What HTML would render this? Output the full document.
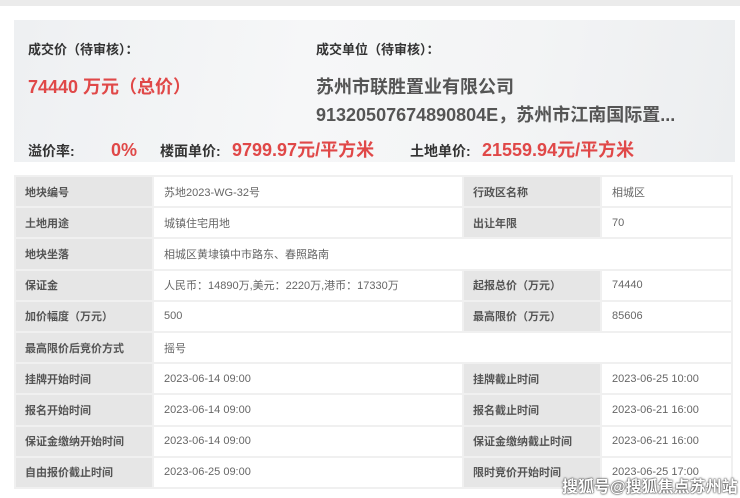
<!DOCTYPE html>
<html><head><meta charset="utf-8"><style>
*{margin:0;padding:0;box-sizing:border-box}
body{width:740px;height:498px;overflow:hidden;background:#fff;font-family:"Liberation Sans","Noto Sans CJK SC",sans-serif;position:relative}
.top{position:absolute;left:0;top:0;width:740px;height:6px;background:#ebebeb}
.sum{position:absolute;left:14px;top:20px;width:721px;height:142px;background:linear-gradient(100deg,#eef0f2 0%,#f6f7f8 40%,#f3f4f5 70%,#eceef0 100%)}
.t{position:absolute;white-space:nowrap}
.lab{font-size:13px;color:#333;font-weight:bold}
.red{color:#e04848;font-weight:bold}
.co{font-size:18px;color:#555;font-weight:bold}
.row{position:absolute;left:28px;top:136px;height:26px;display:flex;align-items:baseline;white-space:nowrap}
.row .lab{font-size:14px}
.row .red{font-size:18px}
table{position:absolute;left:14px;top:175px;width:719px;border-collapse:collapse;font-size:11px}
td{height:31.2px;border:2px solid #f0f0f0;padding-left:10px;color:#666}
td.l{background:#e6e6e6;color:#555;font-weight:bold;padding-left:9px}
.wm{position:absolute;left:562px;top:473px;font-size:16px;color:#fff;font-weight:bold;text-shadow:0 0 2px #333,0 0 1px #000;white-space:nowrap}
</style></head><body>
<div class="top"></div>
<div class="sum"></div>
<div class="t lab" style="left:28px;top:39px">成交价（待审核）：</div>
<div class="t lab" style="left:316px;top:39px">成交单位（待审核）：</div>
<div class="t red" style="left:28px;top:73px;font-size:18px">74440 万元（总价）</div>
<div class="t co" style="left:316px;top:73px">苏州市联胜置业有限公司</div>
<div class="t co" style="left:316px;top:101px">91320507674890804E，苏州市江南国际置...</div>
<div class="row">
<span class="lab" style="width:83px">溢价率:</span><span class="red" style="width:49px">0%</span>
<span class="lab" style="width:72px">楼面单价:</span><span class="red" style="width:178px">9799.97元/平方米</span>
<span class="lab" style="width:72px">土地单价:</span><span class="red">21559.94元/平方米</span>
</div>
<table>
<colgroup><col style="width:138px"><col style="width:310px"><col style="width:138px"><col></colgroup>
<tr><td class="l">地块编号</td><td>苏地2023-WG-32号</td><td class="l">行政区名称</td><td>相城区</td></tr>
<tr><td class="l">土地用途</td><td>城镇住宅用地</td><td class="l">出让年限</td><td>70</td></tr>
<tr><td class="l">地块坐落</td><td colspan="3">相城区黄埭镇中市路东、春照路南</td></tr>
<tr><td class="l">保证金</td><td>人民币：14890万,美元：2220万,港币：17330万</td><td class="l">起报总价（万元）</td><td>74440</td></tr>
<tr><td class="l">加价幅度（万元）</td><td>500</td><td class="l">最高限价（万元）</td><td>85606</td></tr>
<tr><td class="l">最高限价后竞价方式</td><td colspan="3">摇号</td></tr>
<tr><td class="l">挂牌开始时间</td><td>2023-06-14 09:00</td><td class="l">挂牌截止时间</td><td>2023-06-25 10:00</td></tr>
<tr><td class="l">报名开始时间</td><td>2023-06-14 09:00</td><td class="l">报名截止时间</td><td>2023-06-21 16:00</td></tr>
<tr><td class="l">保证金缴纳开始时间</td><td>2023-06-14 09:00</td><td class="l">保证金缴纳截止时间</td><td>2023-06-21 16:00</td></tr>
<tr><td class="l">自由报价截止时间</td><td>2023-06-25 09:00</td><td class="l">限时竞价开始时间</td><td>2023-06-25 17:00</td></tr>
</table>
<div class="wm">搜狐号@搜狐焦点苏州站</div>
</body></html>
